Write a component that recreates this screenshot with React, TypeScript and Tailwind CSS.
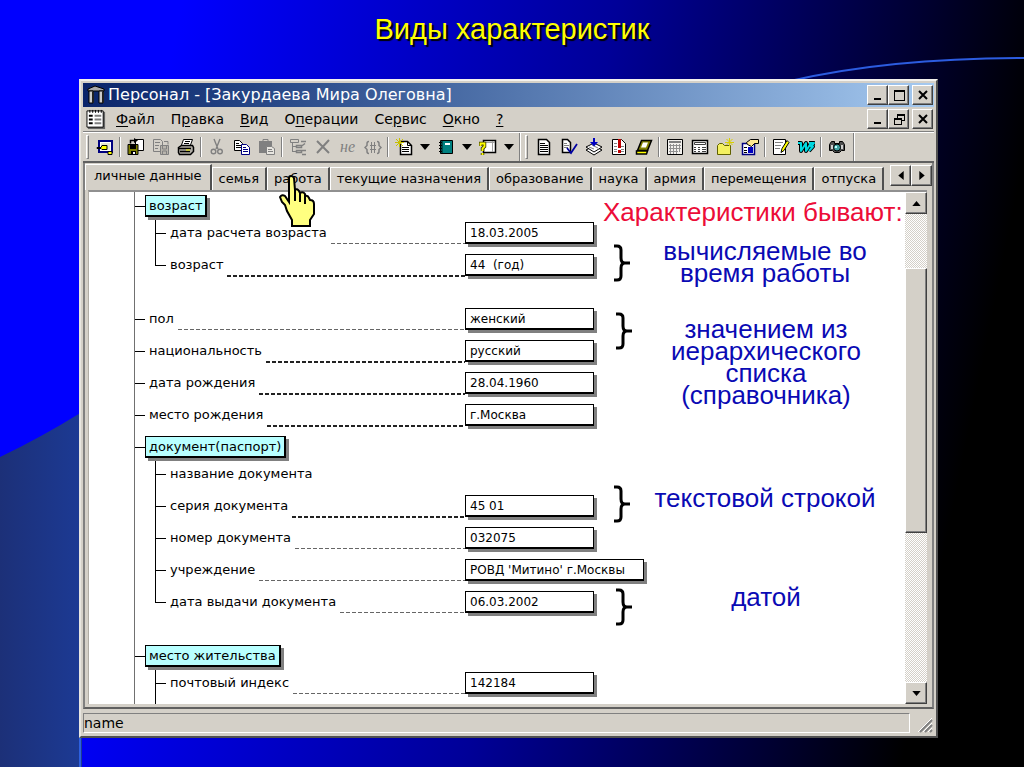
import React, { useState } from 'react'

interface Field {
  id: string
  label: string
  value?: string
  strong?: boolean
  wide?: boolean
}

const ageFields: Field[] = [
  { id: 'age-date', label: 'дата расчета возраста', value: '18.03.2005' },
  { id: 'age', label: 'возраст', value: '44  (год)', strong: true },
]

const mainFields: Field[] = [
  { id: 'sex', label: 'пол', value: 'женский' },
  { id: 'nationality', label: 'национальность', value: 'русский', strong: true },
  { id: 'birth-date', label: 'дата рождения', value: '28.04.1960', strong: true },
  { id: 'birth-place', label: 'место рождения', value: 'г.Москва', strong: true },
]

const documentFields: Field[] = [
  { id: 'doc-name', label: 'название документа' },
  { id: 'doc-series', label: 'серия документа', value: '45 01', strong: true },
  { id: 'doc-number', label: 'номер документа', value: '032075' },
  { id: 'doc-office', label: 'учреждение', value: "РОВД 'Митино' г.Москвы", wide: true },
  { id: 'doc-date', label: 'дата выдачи документа', value: '06.03.2002' },
]

const tabs = [
  'личные данные',
  'семья',
  'работа',
  'текущие назначения',
  'образование',
  'наука',
  'армия',
  'перемещения',
  'отпуска',
]

const menu = [
  ['', 'Ф', 'айл'],
  ['П', 'р', 'авка'],
  ['', 'В', 'ид'],
  ['О', 'п', 'ерации'],
  ['Се', 'р', 'вис'],
  ['', 'О', 'кно'],
  ['', '?', ''],
]

const raised =
  'border border-t-white border-l-white border-r-[#404040] border-b-[#404040] shadow-[inset_-1px_-1px_0_#808080] bg-[#d4d0c8]'

// ---- Toolbar drawings, all on an 18x18 grid ----

const icons: Record<string, React.ReactNode> = {
  card: (
    <>
      <path d="M3 3h13v11H3z" fill="#fff" stroke="#000080" strokeWidth="2" />
      <path d="M5 5h9v7H5z" fill="#e8e6d0" />
      <path d="M1 9.500h4l1-2h5v4H6l-1-1H1z" fill="#ff0" stroke="#000" />
      <path d="M12 13.500h4v3h-4z" fill="#ff0" stroke="#000" />
    </>
  ),
  saveOpen: (
    <>
      <path d="M8.500 1.500h8v11h-8z" fill="#fff" stroke="#000" />
      <path d="M3.500 5.500v-3h5" fill="none" stroke="#000" strokeWidth="1.500" />
      <path d="M7 0v5l4-2.500z" fill="#000" />
      <path d="M1 6.500h10v10H1z" fill="#808000" stroke="#000" />
      <path d="M3 7h6v4H3zM4 13h5v4H4z" fill="#000" />
      <path d="M6 14h2v2H6z" fill="#fff" />
    </>
  ),
  saveClose: (
    <g stroke="#808080" fill="none">
      <path d="M1.500 1.500h7l2 2v10h-9z" />
      <path d="M3 4.500h5M3 7.500h4M3 10.500h3" />
      <path d="M8.500 7.500h8v9h-8z" fill="#b8b4ac" />
      <path d="M10.500 8v3h4V8M10.500 16v-3h4v3M12 3.500h4v3" />
    </g>
  ),
  print: (
    <>
      <path d="M4.500 7l2-5.500h9l-2 5.500" fill="#fff" stroke="#000" />
      <path d="M8 3.500h5M7 5.500h5" stroke="#000" />
      <path d="M1.500 9.500l3-2h11l1 2v4l-3 3h-11l-1-2z" fill="#b0aca4" stroke="#000" strokeWidth="1.500" />
      <path d="M2 10.500h12M3 13.500h10" stroke="#000" strokeWidth="1.500" />
      <path d="M9 11.500h4v1H9z" fill="#ff0" />
    </>
  ),
  cut: (
    <g stroke="#808080" fill="none" strokeWidth="1.400">
      <path d="M6 1l4 10M12 1L8 11" />
      <circle cx="5.500" cy="13.500" r="2.300" />
      <circle cx="12" cy="13.500" r="2.300" />
    </g>
  ),
  copy: (
    <>
      <path d="M1.500 2.500h5l3 3v7h-8z" fill="#fff" stroke="#000" />
      <path d="M3 5.500h3M3 7.500h5M3 9.500h5" stroke="#000" />
      <path d="M8.500 6.500h5l3 3v7h-8z" fill="#fff" stroke="#000080" />
      <path d="M10 9.500h3M10 11.500h5M10 13.500h5" stroke="#000080" />
    </>
  ),
  paste: (
    <>
      <path d="M1 3h13v12H1z" fill="#808080" />
      <path d="M5 1.500h5v2H5z" fill="#d4d0c8" stroke="#808080" />
      <path d="M8.500 8.500h5l3 2v6h-8z" fill="#e8e6e0" stroke="#808080" />
      <path d="M10 11.500h4M10 13.500h5" stroke="#808080" />
    </>
  ),
  tree: (
    <g stroke="#808080" fill="none">
      <path d="M1.500 1.500h8v3h-8zM3.500 5v9M4 8.500h3M4 13.500h3" />
      <path d="M7.500 7.500h5v2h-5zM7.500 12.500h5v2h-5zM12 3.500h5M16 5.500l-4 3M13 12.500h4M13 16.500h4" strokeWidth="1.500" />
    </g>
  ),
  remove: <path d="M3 3l12 12M15 2L3 15" stroke="#808080" strokeWidth="2" fill="none" />,
  newDoc: (
    <>
      <path d="M5.500 3.500h7l4 4v9h-11z" fill="#fff" stroke="#000" strokeWidth="1.500" />
      <path d="M12.500 3v4.500H17M7 9.500h7M7 11.500h7M7 13.500h7" stroke="#000" fill="none" />
      <path d="M4.500 0v9M0 4.500h9M1 1l7 7M8 1L1 8" stroke="#c8c000" />
    </>
  ),
  book: (
    <>
      <path d="M3.500 2.500h12v13h-12z" fill="#008080" stroke="#000" />
      <path d="M4 3h2v12H4z" fill="#004c4c" />
      <path d="M8 5h5v2H8z" fill="#fff" />
      <path d="M2 4.500h3M2 7.500h3M2 10.500h3M2 13.500h3" stroke="#000" />
    </>
  ),
  help: (
    <>
      <path d="M4.500 2.500h12v12h-12z" fill="#fff" stroke="#000" strokeWidth="1.500" />
      <path d="M13.500 3v11M5 4.500h11" stroke="#a0a0a0" />
      <path d="M1.500 8V5.500h4v3l-2 2V13M3.500 15v2" stroke="#404000" strokeWidth="3.500" fill="none" />
      <path d="M1.500 8V5.500h4v3l-2 2V13M3.500 15v2" stroke="#ff0" strokeWidth="1.800" fill="none" />
    </>
  ),
  text: (
    <>
      <path d="M3.500 1.500h8l3 3v12h-11z" fill="#fff" stroke="#000" strokeWidth="1.500" />
      <path d="M5 5.500h5M5 7.500h8M5 9.500h8M5 11.500h8M5 13.500h8" stroke="#000" />
    </>
  ),
  check: (
    <>
      <path d="M2.500 1.500h5l3 3v10h-8z" fill="#fff" stroke="#000" strokeWidth="1.500" />
      <path d="M4 5.500h3M4 7.500h5M4 9.500h4" stroke="#808080" />
      <path d="M7 10l4 5 6-9" fill="none" stroke="#0000a0" strokeWidth="1.800" />
    </>
  ),
  stack: (
    <>
      <path d="M1 12l8-4 8 4-8 5z" fill="#fff" stroke="#000" />
      <path d="M1 9l8-4 8 4-8 5z" fill="#fff" stroke="#000" />
      <path d="M4 9l5 2M7 7l6 3" stroke="#808080" />
      <path d="M8 0h2v4h3L9 8.500 5 4h3z" fill="#0000c0" />
    </>
  ),
  alert: (
    <>
      <path d="M2.500 1.500h9l4 4v11h-13z" fill="#fff" stroke="#000" />
      <path d="M4 5.500h3M4 8.500h3M4 11.500h3M4 13.500h3M11 8.500h3M11 11.500h3M11 13.500h3" stroke="#808080" />
      <path d="M8 1h3v9H8zM8 12h3v3H8z" fill="#c00000" />
    </>
  ),
  scroll: (
    <>
      <path d="M6.500 2.500h10l-4 10h-10z" fill="#808000" stroke="#000" strokeWidth="1.500" />
      <path d="M8 4.500h5l-2 5H6z" fill="#fff" />
      <path d="M1.500 13h11l-1 3h-10z" fill="#ff0" stroke="#000" strokeWidth="1.500" />
    </>
  ),
  list: (
    <>
      <path d="M1.500 1.500h15v15h-15z" fill="#f4f2ee" stroke="#000" />
      <path d="M3 3h12v2H3z" fill="#808080" />
      <path d="M3 7.500h12M3 10.500h12M3 13.500h9M4.500 6v10M7.500 6v10M10.500 6v10M13.500 6v8" fill="none" stroke="#909090" />
    </>
  ),
  calculator: (
    <>
      <path d="M1.500 2.500h15v13h-15z" fill="#fff" stroke="#000" strokeWidth="1.500" />
      <path d="M3.500 4.500h11v2h-11z" fill="none" stroke="#404040" />
      <path d="M3 9.500h2M7 9.500h2M11 9.500h4M3 11.500h2M7 11.500h2M11 11.500h4M3 13.500h2M7 13.500h2M11 13.500h4" stroke="#404040" />
    </>
  ),
  folder: (
    <>
      <path d="M1.500 7.500l2-2h3l2 2h6v9h-13z" fill="#f4f060" stroke="#606000" />
      <path d="M13.500 0v8M9 4.500h9M10.500 1l6 6M16.500 1l-6 6" stroke="#d8d000" />
    </>
  ),
  props: (
    <>
      <path d="M1.500 5.500h12v11h-12z" fill="#fff" stroke="#000080" strokeWidth="1.500" />
      <path d="M3 9.500h3M3 12.500h3M3 14.500h3" stroke="#000" />
      <path d="M7 9h5v6H7z" fill="#0000c0" />
      <path d="M5.500 4.500l4-3h8v4h-4l-3 3-4-2z" fill="#ffe890" stroke="#000" />
    </>
  ),
  edit: (
    <>
      <path d="M1.500 1.500h12v15h-12z" fill="#fff" stroke="#000" />
      <path d="M3 4.500h8M3 7.500h6M3 10.500h5" stroke="#808080" />
      <path d="M15 2.500l2 2-5 8-3 2 1-4z" fill="#ff0" stroke="#000" />
    </>
  ),
  word: (
    <g fill="none" strokeLinejoin="round">
      <path d="M1 5h3v8l5-8v8l5-8M12 5h5l-3 3.500h2L12 13" stroke="#000" strokeWidth="4" />
      <path d="M1 5h3v8l5-8v8l5-8M12 5h5l-3 3.500h2L12 13" stroke="#00d8e0" strokeWidth="2" />
    </g>
  ),
  camera: (
    <>
      <path d="M1.500 6.500l2-3h3v2h5v-2h3l2 3v6h-3l-2 2h-5l-2-2h-3z" fill="#505050" stroke="#000" />
      <path d="M3 7h2v4H3zM13 7h2v4h-2z" fill="#d0d0d0" />
      <circle cx="9" cy="9.500" r="3.500" fill="#40a0a0" stroke="#000" />
      <path d="M7 8h2v2H7z" fill="#c0ffff" />
    </>
  ),
}

const Drawing = ({ name }: { name: string }) => (
  <svg viewBox="0 0 18 18" className="h-[18px] w-[18px]" aria-hidden="true">
    {icons[name]}
  </svg>
)

const ToolButton = ({ name }: { name: string }) => (
  <button type="button" aria-label={name} className="flex h-6 w-[25px] shrink-0 items-center justify-center">
    {name === 'not' ? (
      <span className="font-['Liberation_Serif',serif] text-base italic leading-4 text-[#808080]">не</span>
    ) : name === 'braces' ? (
      <svg viewBox="0 0 18 18" className="h-[18px] w-[18px]" fill="none" stroke="#808080" aria-hidden="true">
        <path d="M5 3.500q-2 0-2 2v2L1 9.500l2 2v2q0 2 2 2M13 3.500q2 0 2 2v2l2 2-2 2v2q0 2-2 2" strokeWidth="1.500" />
        <path d="M7.500 4v11M10.500 4v11M6 7.500h6M6 11.500h6" />
      </svg>
    ) : (
      <Drawing name={name} />
    )}
  </button>
)

const Dropdown = () => (
  <button type="button" aria-label="more" className="flex h-6 w-[17px] shrink-0 items-center justify-center">
    <svg viewBox="0 0 10 6" className="h-[6px] w-[10px]" aria-hidden="true">
      <path d="M0 0h10L5 6z" />
    </svg>
  </button>
)

const Separator = () => (
  <div className="flex w-[6px] shrink-0 justify-center py-0.5">
    <div className="w-0.5 border-l border-[#808080] bg-white" />
  </div>
)

const Tools = ({ items }: { items: string[] }) => (
  <>
    {items.map((item, i) => {
      if (item === '|') return <Separator key={i} />
      if (item === 'v') return <Dropdown key={i} />
      return <ToolButton key={i} name={item} />
    })}
  </>
)

const Grip = () => <div className="mr-[3px] w-[3px] border border-t-white border-l-white border-r-[#808080] border-b-[#808080]" />

const WindowButtons = ({ restore }: { restore?: boolean }) => (
  <div className="flex">
    <button type="button" aria-label="minimize" className={`flex h-5 w-[21px] items-center justify-center ${raised}`}>
      <svg viewBox="0 0 14 12" className="h-3 w-3.5" aria-hidden="true">
        <path d="M3 9h7v2H3z" />
      </svg>
    </button>
    <button type="button" aria-label="maximize" className={`mr-[3px] flex h-5 w-[21px] items-center justify-center ${raised}`}>
      <svg viewBox="0 0 14 12" className="h-3 w-3.5" fill="none" stroke="#000" shapeRendering="crispEdges" aria-hidden="true">
        {restore ? (
          <path d="M5 5V1h7v6H9M5 2h7M2 5h7v6H2zM2 6h7" />
        ) : (
          <path d="M2 1h10v10H2zM2 2h10" />
        )}
      </svg>
    </button>
    <button type="button" aria-label="close" className={`flex h-5 w-[21px] items-center justify-center ${raised}`}>
      <svg viewBox="0 0 14 12" className="h-3 w-3.5" aria-hidden="true">
        <path d="M3 2l8 8M11 2l-8 8" stroke="#000" strokeWidth="2" />
      </svg>
    </button>
  </div>
)

const Row = ({ field, nested, last }: { field: Field; nested?: boolean; last?: boolean }) => (
  <div className={`flex h-8 ${nested ? 'pl-5' : ''}`}>
    {nested ? (
      <div className="mr-1 flex w-[11px] shrink-0 flex-col">
        <div className="h-[17px] border-b border-l border-black" />
        <div className={`flex-1 ${last ? '' : 'border-l border-black'}`} />
      </div>
    ) : (
      <div className="mr-1 h-[17px] w-[10px] shrink-0 border-b border-black" />
    )}
    <label htmlFor={field.id} className="self-center whitespace-nowrap text-[13px] leading-4">
      {field.label}
    </label>
    {field.value && (
      <>
        <div
          className={`ml-1 mt-[26px] flex-1 ${
            field.strong
              ? 'h-0.5 bg-[repeating-linear-gradient(90deg,#222_0_4px,transparent_4px_6px)]'
              : 'h-px bg-[repeating-linear-gradient(90deg,#666_0_4px,transparent_4px_6px)]'
          }`}
        />
        <div className={`mt-[5px] shrink-0 ${field.wide ? '-mr-[50px] w-[179px]' : 'w-[129px]'}`}>
          <input
            id={field.id}
            readOnly
            defaultValue={field.value}
            className="block h-[22px] w-full border border-b-2 border-black bg-white px-1 text-xs shadow-[3px_3px_0_#808080] outline-none"
          />
        </div>
      </>
    )}
  </div>
)

const Node = ({ children }: { children: React.ReactNode }) => (
  <div className="flex h-[22px]">
    <div className="h-3 w-[10px] border-b border-black" />
    <div className="relative z-10 flex items-center border border-b-2 border-r-2 border-black bg-[#b8ffff] px-[3px] text-[13px] leading-4 shadow-[3px_3px_0_#808080]">
      {children}
    </div>
  </div>
)

const Note = ({ className, textClass, children }: { className: string; textClass: string; children: React.ReactNode }) => (
  <div className={`flex items-start ${className}`}>
    <svg viewBox="0 0 18 38" className="mt-1 h-[38px] w-[18px] shrink-0" fill="none" aria-hidden="true">
      <path d="M1 2h3q4 0 4 4v8q0 5 4 5h5M1 36h3q4 0 4-4v-8q0-5 4-5" stroke="#000" strokeWidth="3" />
    </svg>
    <p className={`mx-auto text-center text-[26px] leading-[22px] text-[#0a0ab4] ${textClass}`}>{children}</p>
  </div>
)

const ScrollBar = () => (
  <div className="flex w-[22px] shrink-0 flex-col bg-[#eceae6]">
    <button type="button" aria-label="up" className={`flex h-[22px] items-center justify-center ${raised}`}>
      <svg viewBox="0 0 10 6" className="h-[5px] w-[9px]" aria-hidden="true">
        <path d="M0 6h10L5 0z" />
      </svg>
    </button>
    <div className="flex-[54] bg-[repeating-conic-gradient(#d4d0c8_0_25%,#fff_0_50%)] bg-[length:2px_2px]" />
    <div className={`flex-[265] ${raised}`} />
    <div className="flex-[150] bg-[repeating-conic-gradient(#d4d0c8_0_25%,#fff_0_50%)] bg-[length:2px_2px]" />
    <button type="button" aria-label="down" className={`flex h-[22px] items-center justify-center ${raised}`}>
      <svg viewBox="0 0 10 6" className="h-[5px] w-[9px]" aria-hidden="true">
        <path d="M0 0h10L5 6z" />
      </svg>
    </button>
  </div>
)

const Backdrop = () => (
  <svg viewBox="0 0 1024 767" preserveAspectRatio="none" className="absolute inset-0 h-full w-full" aria-hidden="true">
    <defs>
      <linearGradient id="sky" gradientUnits="userSpaceOnUse" x1="170" y1="60" x2="1010" y2="230">
        <stop offset="0" stopColor="#0000ff" />
        <stop offset="0.500" stopColor="#000098" />
        <stop offset="0.850" stopColor="#000030" />
        <stop offset="1" stopColor="#000000" />
      </linearGradient>
      <linearGradient id="disc" x1="0" y1="0" x2="1" y2="0">
        <stop offset="0" stopColor="#1c3078" />
        <stop offset="1" stopColor="#1c3a94" />
      </linearGradient>
    </defs>
    <rect width="1024" height="767" fill="url(#sky)" />
    <path d="M0 457Q40 438 82 412V767H0z" fill="url(#disc)" />
    <path d="M80 738v29" stroke="#2c60e0" strokeWidth="2" />
    <path d="M790 81Q890 58 1024 58" fill="none" stroke="#2c5ce0" strokeWidth="2" />
  </svg>
)

const Hand = () => (
  <svg viewBox="0 0 36 52" className="pointer-events-none absolute left-3 top-2 z-20 h-[52px] w-[36px]" aria-hidden="true">
    <path
      d="M10 3q0-2 2-2t3 2l1 12q2-2 4 1l1 2q3-2 5 1v2q3-1 4 2l1 2q4 0 4 4v10l-4 6v6H13v-6L8 36 6 30 3 27 1 22q2-3 5-1l4 6z"
      fill="#ffff80"
      stroke="#000"
      strokeWidth="2"
    />
    <path d="M16 15v11M21 18v9M26 21v8" stroke="#000" strokeWidth="2" fill="none" />
  </svg>
)

export default function App() {
  const [activeTab, setActiveTab] = useState(tabs[0])

  return (
    <div className="relative flex min-h-screen flex-col bg-black font-['DejaVu_Sans',sans-serif] text-black">
      <Backdrop />

      <h1 className="relative pb-8 pt-[11px] text-center font-['Liberation_Sans',sans-serif] text-[29px] leading-9 text-[#ffff00] [text-shadow:2px_2px_1px_#000]">
        Виды характеристик
      </h1>

      <main className="relative mb-[29px] ml-[79px] mr-[86px] flex flex-1 flex-col border-2 border-b-[#505050] border-l-[#e8e6e0] border-r-[#505050] border-t-[#f4f2ee] bg-[#d4d0c8] px-0.5 pt-0.5">
        {/* Title bar */}
        <header className="flex h-6 items-center bg-linear-to-r from-[#0a246a] to-[#a6caf0] pl-1 pr-px">
          <svg viewBox="0 0 18 20" className="h-5 w-[18px]" aria-hidden="true">
            <path d="M1 4l7-3 9 3v2H1z" fill="#aaa" stroke="#000" />
            <path d="M2 6h4v12H2zM12 6h4v12h-4z" fill="#ccc" stroke="#000" />
            <path d="M5 7h2v11H5zM15 7h2v11h-2z" fill="#222" />
          </svg>
          <span className="ml-[3px] flex-1 whitespace-nowrap text-base leading-5 text-white">Персонал - [Закурдаева Мира Олеговна]</span>
          <WindowButtons />
        </header>

        {/* Menu */}
        <nav className="flex h-[25px] items-center border-b border-[#808080] pl-[3px] pr-px">
          <svg viewBox="0 0 22 22" className="mr-[9px] h-[21px] w-[21px]" aria-hidden="true">
            <path d="M2 3h18v18H2z" fill="#666" />
            <path d="M1 2h17v17H1z" fill="#fff" stroke="#000" />
            <path d="M4 1v3M7 1v3M10 1v3M13 1v3M16 1v3" stroke="#000" />
            <path d="M3 7h4M3 11h4M3 15h4" stroke="#000" strokeWidth="2" />
            <path d="M9 7h7M9 11h7M9 15h7" stroke="#808080" strokeWidth="2" />
          </svg>
          <div className="flex flex-1 gap-4">
            {menu.map(([before, key, after]) => (
              <button key={before + key + after} type="button" className="whitespace-nowrap text-sm leading-5">
                {before}
                <span className="underline underline-offset-2">{key}</span>
                {after}
              </button>
            ))}
          </div>
          <WindowButtons restore />
        </nav>

        {/* Toolbar */}
        <div className="flex h-[31px] items-stretch border-b-2 border-t border-b-[#606060] border-t-white">
          <div className="flex border-r border-[#808080] py-0.5 pl-[3px] pr-0.5">
            <Grip />
            <Tools
              items={['card', '|', 'saveOpen', 'saveClose', 'print', '|', 'cut', 'copy', 'paste', '|', 'tree', 'remove', 'not', 'braces', '|', 'newDoc', 'v', 'book', 'v', 'help', 'v']}
            />
          </div>
          <div className="flex border-l border-r border-l-white border-r-[#808080] py-0.5 pl-1 pr-1">
            <Grip />
            <Tools
              items={['text', 'check', 'stack', 'alert', 'scroll', '|', 'list', 'calculator', 'folder', 'props', '|', 'edit', 'word', '|', 'camera']}
            />
          </div>
          <div className="flex-1 border-l border-white" />
        </div>

        {/* Tabs and page */}
        <section className="flex flex-1 flex-col border-b-2 border-l-2 border-r-2 border-b-[#606060] border-l-[#808080] border-r-[#808080]">
          <div className="flex h-[27px] items-end">
            <div role="tablist" className="flex h-full min-w-0 flex-1 items-end">
              {tabs.map(tab => (
                <div key={tab} className="relative">
                  <button
                    type="button"
                    role="tab"
                    aria-selected={activeTab === tab}
                    onClick={() => setActiveTab(tab)}
                    className={`block whitespace-nowrap border-l border-r-2 border-t border-l-white border-r-[#505050] border-t-white text-[13px] ${
                      activeTab === tab ? 'h-[26px] px-2 pb-1' : 'h-[23px] px-1.5'
                    }`}
                  >
                    {tab}
                  </button>
                  {tab === 'работа' && <Hand />}
                </div>
              ))}
            </div>
            <button type="button" aria-label="left" className={`mb-1 flex h-[21px] w-[21px] shrink-0 items-center justify-center ${raised}`}>
              <svg viewBox="0 0 6 10" className="h-[9px] w-[6px]" aria-hidden="true">
                <path d="M6 0v10L0 5z" />
              </svg>
            </button>
            <button type="button" aria-label="right" className={`mb-1 flex h-[21px] w-[21px] shrink-0 items-center justify-center ${raised}`}>
              <svg viewBox="0 0 6 10" className="h-[9px] w-[6px]" aria-hidden="true">
                <path d="M0 0v10l6-5z" />
              </svg>
            </button>
          </div>

          <div className="mb-[3px] ml-[3px] mr-[5px] flex flex-1 border-l border-t-2 border-l-[#b0aca4] border-t-[#909090] bg-white">
            <form className="flex w-[505px] shrink-0 flex-col pl-[45px]">
              <div className="flex flex-1 flex-col border-l border-[#707070] pt-[3px]">
                <Node>возраст</Node>
                {ageFields.map((field, i) => (
                  <Row key={field.id} field={field} nested last={i === ageFields.length - 1} />
                ))}
                <div className="h-[22px]" />
                {mainFields.map(field => (
                  <Row key={field.id} field={field} />
                ))}
                <div className="h-[5px]" />
                <Node>документ(паспорт)</Node>
                {documentFields.map((field, i) => (
                  <Row key={field.id} field={field} nested last={i === documentFields.length - 1} />
                ))}
                <div className="h-[27px]" />
                <Node>место жительства</Node>
                <Row field={{ id: 'zip', label: 'почтовый индекс', value: '142184' }} nested />
                <div className="ml-5 flex-1 border-l border-black" />
              </div>
            </form>

            <aside className="min-w-0 flex-1 pl-[5px] font-['Liberation_Sans',sans-serif]">
              <h2 className="whitespace-nowrap pl-1 pt-1.5 text-[26px] leading-7 text-[#ec0c38]">Характеристики бывают:</h2>
              <div className="pl-3.5 pr-1.5">
                <Note className="mt-3.5" textClass="">
                  вычисляемые во
                  <br />
                  время работы
                </Note>
                <Note className="ml-0.5 mt-6" textClass="mt-2.5">
                  значением из
                  <br />
                  иерархического
                  <br />
                  списка
                  <br />
                  (справочника)
                </Note>
                <Note className="mt-[75px]" textClass="mt-1.5">
                  текстовой строкой
                </Note>
                <Note className="ml-0.5 mt-[61px]" textClass="mt-0.5">
                  датой
                </Note>
              </div>
            </aside>

            <ScrollBar />
          </div>
        </section>

        {/* Status bar */}
        <footer className="flex h-[27px] items-stretch pt-1 pb-[3px]">
          <div className="flex flex-1 items-center border border-b-white border-l-[#808080] border-r-white border-t-[#808080] text-sm leading-4">
            name
          </div>
          <svg viewBox="0 0 24 20" className="h-5 w-6" aria-hidden="true">
            <path d="M10 19L22 7M15 19l7-7M20 19l2-2" stroke="#808080" strokeWidth="2" />
            <path d="M8 19L22 5M13 19l9-9M18 19l4-4" stroke="#fff" />
          </svg>
        </footer>
      </main>
    </div>
  )
}
